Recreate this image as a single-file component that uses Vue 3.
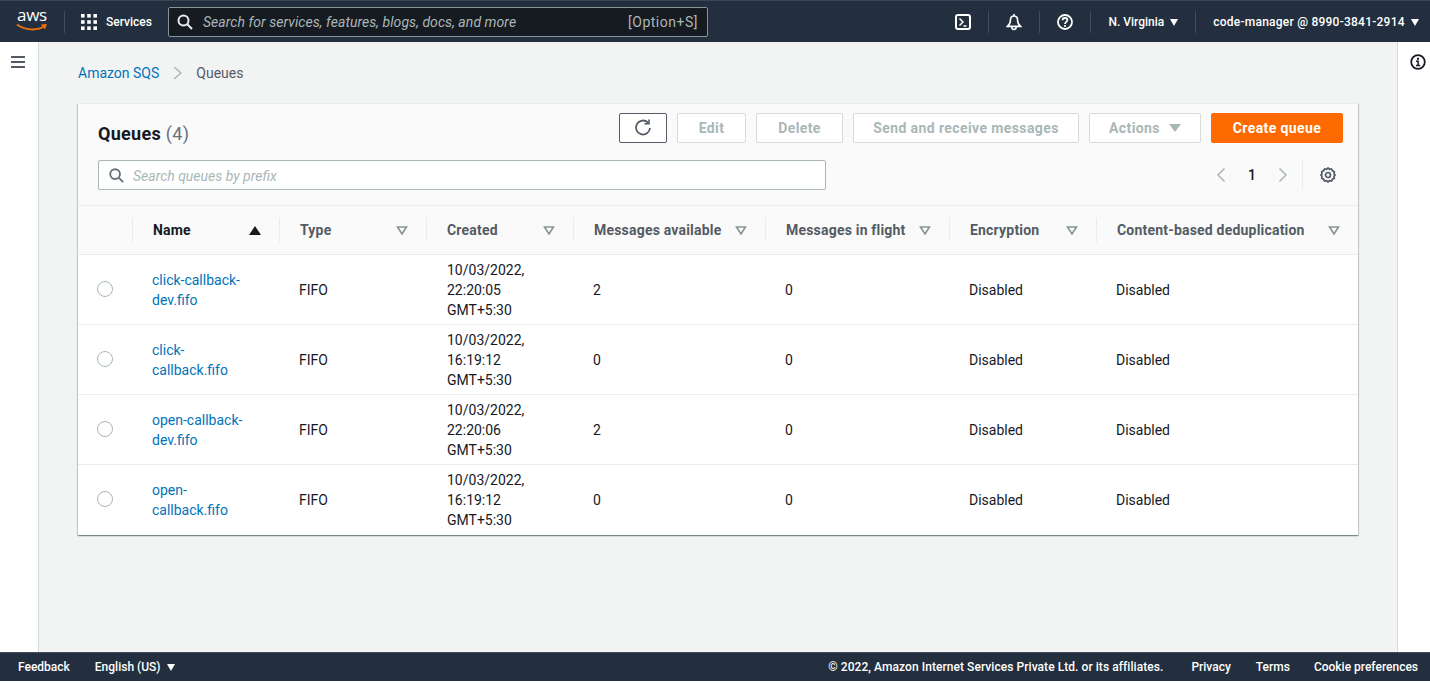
<script setup>
const columns = [
  { label: 'Name', sorted: true },
  { label: 'Type' },
  { label: 'Created' },
  { label: 'Messages available' },
  { label: 'Messages in flight' },
  { label: 'Encryption' },
  { label: 'Content-based deduplication' },
]

const queues = [
  { name: 'click-callback-dev.fifo', created: '10/03/2022, 22:20:05 GMT+5:30', available: 2 },
  { name: 'click-callback.fifo', created: '10/03/2022, 16:19:12 GMT+5:30', available: 0 },
  { name: 'open-callback-dev.fifo', created: '10/03/2022, 22:20:06 GMT+5:30', available: 2 },
  { name: 'open-callback.fifo', created: '10/03/2022, 16:19:12 GMT+5:30', available: 0 },
]
</script>

<template>
  <div class="page">
    <header class="topnav">
      <div class="logo">
        <span class="logo-text">aws</span>
        <svg width="32" height="9" viewBox="0 0 32 9"><path d="M1 1.5C9 7.5 21 8 29 3" fill="none" stroke="#ec7211" stroke-width="2"/><path d="M25 1.6l6-.6-2 5.4z" fill="#ec7211"/></svg>
      </div>
      <span class="nav-sep first"></span>
      <svg class="grid-icon" width="16" height="16" viewBox="0 0 16 16" fill="#fff">
        <rect x="0" y="0" width="3.6" height="3.6"/><rect x="6.2" y="0" width="3.6" height="3.6"/><rect x="12.4" y="0" width="3.6" height="3.6"/>
        <rect x="0" y="6.2" width="3.6" height="3.6"/><rect x="6.2" y="6.2" width="3.6" height="3.6"/><rect x="12.4" y="6.2" width="3.6" height="3.6"/>
        <rect x="0" y="12.4" width="3.6" height="3.6"/><rect x="6.2" y="12.4" width="3.6" height="3.6"/><rect x="12.4" y="12.4" width="3.6" height="3.6"/>
      </svg>
      <span class="services">Services</span>
      <div class="nav-search">
        <svg width="16" height="16" viewBox="0 0 16 16" fill="none" stroke="#eaeded" stroke-width="2"><circle cx="6.5" cy="6.5" r="5"/><path d="M10.3 10.3L15 15"/></svg>
        <span class="nav-placeholder">Search for services, features, blogs, docs, and more</span>
        <span class="nav-shortcut">[Option+S]</span>
      </div>
      <div class="nav-right">
        <svg class="nav-icon" width="16" height="16" viewBox="0 0 16 16" fill="none" stroke="#fff" stroke-width="2"><rect x="1" y="1" width="14" height="14" rx="2"/><path d="M4.5 4.5L8 8l-3.5 3.5M8.5 12h3" stroke-width="1.5"/></svg>
        <span class="nav-sep"></span>
        <svg class="nav-icon" width="16" height="18" viewBox="0 0 16 18" fill="none" stroke="#fff" stroke-width="1.6"><path d="M8 1v2M8 3c-2.6 0-3.6 2-3.6 4.4 0 3-1 4.3-3 6h13.200c-2-1.700-3-3-3-6C11.600 5 10.600 3 8 3zM5.800 13.800c0 1.600 1 2.700 2.200 2.700s2.200-1.100 2.200-2.700"/></svg>
        <span class="nav-sep"></span>
        <svg class="nav-icon" width="16" height="16" viewBox="0 0 16 16" fill="none" stroke="#fff" stroke-width="1.800"><circle cx="8" cy="8" r="7"/><path d="M5.600 6.200C5.600 4.800 6.700 4 8 4s2.400.8 2.400 2.100C10.400 7.800 8 8 8 10"/><path d="M8 11v1.800"/></svg>
        <span class="nav-sep"></span>
        <span class="nav-item region">N. Virginia <i class="caret"></i></span>
        <span class="nav-sep"></span>
        <span class="nav-item account">code-manager @ 8990-3841-2914 <i class="caret"></i></span>
      </div>
    </header>

    <div class="body">
      <aside class="side left">
        <svg width="14" height="12" viewBox="0 0 14 12" fill="#545b64"><rect width="14" height="2"/><rect y="5" width="14" height="2"/><rect y="10" width="14" height="2"/></svg>
      </aside>

      <main class="content">
        <nav class="crumbs">
          <a class="link">Amazon SQS</a>
          <svg width="12" height="16" viewBox="0 0 12 16" fill="none" stroke="#aab7b8" stroke-width="1.500"><path d="M2 2l7 6-7 6"/></svg>
          <span>Queues</span>
        </nav>

        <section class="card">
          <div class="card-head">
            <div class="head-row">
              <h2>Queues <span class="count">(4)</span></h2>
              <div class="actions">
                <button class="btn refresh">
                  <svg width="18" height="18" viewBox="0 0 18 18" fill="none" stroke="#545b64" stroke-width="1.800"><path d="M14 3.600A7 7 0 1 0 16 9"/><path d="M10.500 4.800H15V.4" stroke-width="1.600"/></svg>
                </button>
                <button class="btn edit">Edit</button>
                <button class="btn delete">Delete</button>
                <button class="btn send">Send and receive messages</button>
                <button class="btn action">Actions <i class="caret grey"></i></button>
                <button class="btn primary">Create queue</button>
              </div>
            </div>
            <div class="filter-row">
              <div class="filter">
                <svg width="15" height="15" viewBox="0 0 16 16" fill="none" stroke="#687078" stroke-width="2"><circle cx="6.500" cy="6.500" r="5.200"/><path d="M10.500 10.500L15 15"/></svg>
                <span>Search queues by prefix</span>
              </div>
              <div class="pager">
                <svg width="12" height="16" viewBox="0 0 12 16" fill="none" stroke="#aab7b8" stroke-width="1.500"><path d="M9.500 1.500L3 8l6.500 6.500"/></svg>
                <b>1</b>
                <svg width="12" height="16" viewBox="0 0 12 16" fill="none" stroke="#aab7b8" stroke-width="1.500"><path d="M2.500 1.500L9 8l-6.500 6.500"/></svg>
                <span class="pager-sep"></span>
                <svg width="16" height="16" viewBox="0 0 16 16" fill="none" stroke="#545b64" stroke-width="1.700"><path d="M8 1l1.500 1.300 2-.3 1 1.800 1.800 1-.3 2L15 8l-1 1.200.3 2-1.800 1-1 1.800-2-.3L8 15l-1.500-1.300-2 .3-1-1.800-1.800-1 .3-2L1 8l1-1.200-.3-2 1.800-1 1-1.800 2 .3z"/><circle cx="8" cy="8" r="2.500"/></svg>
              </div>
            </div>
          </div>

          <div class="table">
            <div class="row head">
              <div class="cell check"></div>
              <div v-for="col in columns" :key="col.label" class="th" :class="{ sorted: col.sorted }">
                <span>{{ col.label }}</span>
                <svg v-if="col.sorted" width="12" height="9" viewBox="0 0 12 9" fill="#16191f"><path d="M6 0l6 9H0z"/></svg>
                <svg v-else width="12" height="9" viewBox="0 0 12 9" fill="none" stroke="#879596" stroke-width="1.600"><path d="M1.500 1h9L6 8z"/></svg>
              </div>
            </div>
            <div v-for="q in queues" :key="q.name" class="row item">
              <div class="cell check"><span class="radio"></span></div>
              <div class="cell"><a class="link">{{ q.name }}</a></div>
              <div class="cell">FIFO</div>
              <div class="cell created">{{ q.created }}</div>
              <div class="cell">{{ q.available }}</div>
              <div class="cell">0</div>
              <div class="cell">Disabled</div>
              <div class="cell">Disabled</div>
            </div>
          </div>
        </section>
      </main>

      <aside class="side right">
        <svg width="16" height="16" viewBox="0 0 16 16" fill="none" stroke="#16191f" stroke-width="1.800"><circle cx="8" cy="8" r="6.800"/><path d="M6 7.200h2.100v4.300M6 11.500h4.200" stroke-width="1.500"/><path d="M8 3.800v2" stroke-width="2"/></svg>
      </aside>
    </div>

    <footer class="footer">
      <span class="feedback">Feedback</span>
      <span class="lang">English (US) <i class="caret"></i></span>
      <span class="copy">© 2022, Amazon Internet Services Private Ltd. or its affiliates.</span>
      <span class="foot-link">Privacy</span>
      <span class="foot-link">Terms</span>
      <span class="foot-link">Cookie preferences</span>
    </footer>
  </div>
</template>

<style>
body {
  margin: 0;
  background: #fff;
}
</style>

<style scoped>
.page {
  height: 683px;
  display: flex;
  flex-direction: column;
  font-family: Roboto, "Liberation Sans", sans-serif;
  font-size: 14px;
  line-height: 20px;
  color: #16191f;
  overflow: hidden;
}

.topnav {
  height: 41px;
  flex: none;
  background: #232f3e;
  border-top: 1px solid #3b4654;
  display: flex;
  align-items: center;
  padding-left: 16px;
  color: #fff;
}
.logo {
  width: 32px;
  display: flex;
  flex-direction: column;
  align-items: center;
  margin-top: -3px;
}
.logo-text {
  font-family: "Open Sans", sans-serif;
  font-size: 17px;
  line-height: 14px;
  letter-spacing: -0.3px;
}
.logo svg {
  margin-top: 1px;
}
.nav-sep {
  width: 1px;
  height: 22px;
  background: #414d5c;
}
.nav-sep.first {
  margin: 0 16px;
}
.services {
  font-size: 12px;
  font-weight: 500;
  margin-left: 9px;
}
.nav-search {
  height: 28px;
  margin-left: 16px;
  background: #161a21;
  border: 1px solid #879596;
  border-radius: 2px;
  display: flex;
  align-items: center;
  padding: 0 9px 0 8px;
  width: 521px;
}
.nav-placeholder {
  margin-left: 10px;
  font-style: italic;
  color: #aab7b8;
  flex: 1;
  letter-spacing: 0.06px;
}
.nav-shortcut {
  color: #aab7b8;
  letter-spacing: 0.5px;
}
.nav-right {
  margin-left: auto;
  display: flex;
  align-items: center;
  padding-right: 11px;
}
.nav-right .nav-sep {
  margin: 0 17px;
}
.nav-item {
  font-size: 12px;
  font-weight: 500;
  white-space: nowrap;
}
.account {
  letter-spacing: 0.24px;
}
.caret {
  display: inline-block;
  width: 0;
  height: 0;
  margin-left: 3px;
  border-left: 4.500px solid transparent;
  border-right: 4.500px solid transparent;
  border-top: 7px solid #fff;
}
.caret.grey {
  border-left-width: 6px;
  border-right-width: 6px;
  border-top: 8px solid #aab7b8;
  margin-left: 9px;
}

.body {
  flex: 1;
  display: flex;
  min-height: 0;
}
.side {
  flex: none;
  background: #fff;
  display: flex;
  justify-content: center;
  padding-top: 14px;
  box-sizing: border-box;
}
.side svg {
  display: block;
}
.side.left {
  width: 39px;
  border-right: 1px solid #d5dbdb;
  padding-right: 3px;
}
.side.right {
  width: 33px;
  border-left: 1px solid #d5dbdb;
  padding-left: 8px;
  padding-top: 12px;
}
.content {
  flex: 1;
  background: #f2f3f3;
  padding: 21px 39px 0;
  min-width: 0;
}

.link {
  color: #0073bb;
}
.crumbs {
  height: 20px;
  display: flex;
  align-items: center;
  gap: 12px;
  color: #545b64;
}
.crumbs svg {
  margin-left: 1px;
}

.card {
  margin-top: 20px;
  background: #fff;
  box-shadow: 0 1px 1px 0 rgba(0, 28, 36, 0.3), 1px 1px 1px 0 rgba(0, 28, 36, 0.15), -1px 1px 1px 0 rgba(0, 28, 36, 0.15);
  border-top: 1px solid #eaeded;
}
.card-head {
  background: #fafafa;
  height: 102px;
  box-sizing: border-box;
  padding: 9px 15px 0 20px;
  border-bottom: 1px solid #eaeded;
}
.head-row {
  display: flex;
  justify-content: space-between;
  height: 30px;
}
h2 {
  margin: 6px 0 0;
  font-size: 18px;
  line-height: 30px;
  font-weight: 700;
  letter-spacing: 0.3px;
}
.count {
  font-weight: 400;
  color: #687078;
}
.actions {
  display: flex;
  gap: 10px;
}
.btn {
  font-family: inherit;
  font-size: 14px;
  font-weight: 700;
  line-height: 20px;
  letter-spacing: 0.4px;
  height: 30px;
  padding: 0;
  background: #fff;
  border: 1px solid #d5dbdb;
  border-radius: 2px;
  color: #aab7b8;
  white-space: nowrap;
  display: flex;
  align-items: center;
  justify-content: center;
  box-sizing: border-box;
}
.btn.refresh {
  width: 48px;
  border-color: #545b64;
}
.btn.edit { width: 69px; }
.btn.delete { width: 87px; }
.btn.send { width: 226px; }
.btn.action { width: 112px; }
.btn.primary {
  width: 132px;
  background: #ff6a00;
  border-color: #ff6a00;
  color: #fff;
}
.filter-row {
  display: flex;
  justify-content: space-between;
  align-items: center;
  margin-top: 17px;
  height: 30px;
}
.filter {
  width: 728px;
  height: 30px;
  box-sizing: border-box;
  background: #fff;
  border: 1px solid #aab7b8;
  border-radius: 2px;
  display: flex;
  align-items: center;
  padding-left: 10px;
  gap: 9px;
  font-style: italic;
  color: #aab7b8;
}
.filter span {
  margin-top: 2px;
}
.pager {
  display: flex;
  align-items: center;
  height: 30px;
  padding-right: 7px;
}
.pager b {
  font-weight: 500;
  width: 22px;
  text-align: center;
  margin: 0 14px;
}
.pager-sep {
  width: 1px;
  height: 30px;
  background: #eaeded;
  margin: 0 17px 0 13px;
}

.row {
  display: grid;
  grid-template-columns: 54px 147px 147px 147px 192px 184px 147px 1fr;
  border-bottom: 1px solid #eaeded;
}
.row:last-child {
  border-bottom: 0;
}
.row.head {
  height: 49px;
  background: #fafafa;
  align-items: center;
  box-sizing: border-box;
}
.row.item {
  height: 70px;
  align-items: center;
  box-sizing: border-box;
}
.th {
  height: 24px;
  border-left: 1px solid #eaeded;
  padding: 0 18px 0 20px;
  display: flex;
  align-items: center;
  justify-content: space-between;
  font-weight: 700;
  letter-spacing: 0.2px;
  color: #545b64;
  white-space: nowrap;
}
.th.sorted {
  color: #16191f;
}
.th svg {
  flex: none;
}
.cell {
  padding-left: 20px;
  padding-right: 20px;
}
.cell.check {
  padding: 0 0 0 19px;
}
.cell.created {
  padding-left: 21px;
}
.radio {
  display: block;
  width: 14px;
  height: 14px;
  border: 1px solid #aab7b8;
  border-radius: 50%;
  margin-top: -2px;
}

.footer {
  height: 28px;
  flex: none;
  margin-bottom: 2px;
  background: #232f3e;
  border-top: 1px solid #414d5c;
  color: #fff;
  display: flex;
  align-items: center;
  font-size: 12px;
  font-weight: 500;
  padding: 0 12px 0 18px;
}
.feedback {
  margin-right: 25px;
}
.copy {
  margin-left: auto;
  letter-spacing: 0.06px;
}
.foot-link {
  margin-left: 28px;
}
.footer .foot-link + .foot-link {
  margin-left: 25px;
}
.footer .foot-link:last-child {
  margin-left: 24px;
}
</style>
